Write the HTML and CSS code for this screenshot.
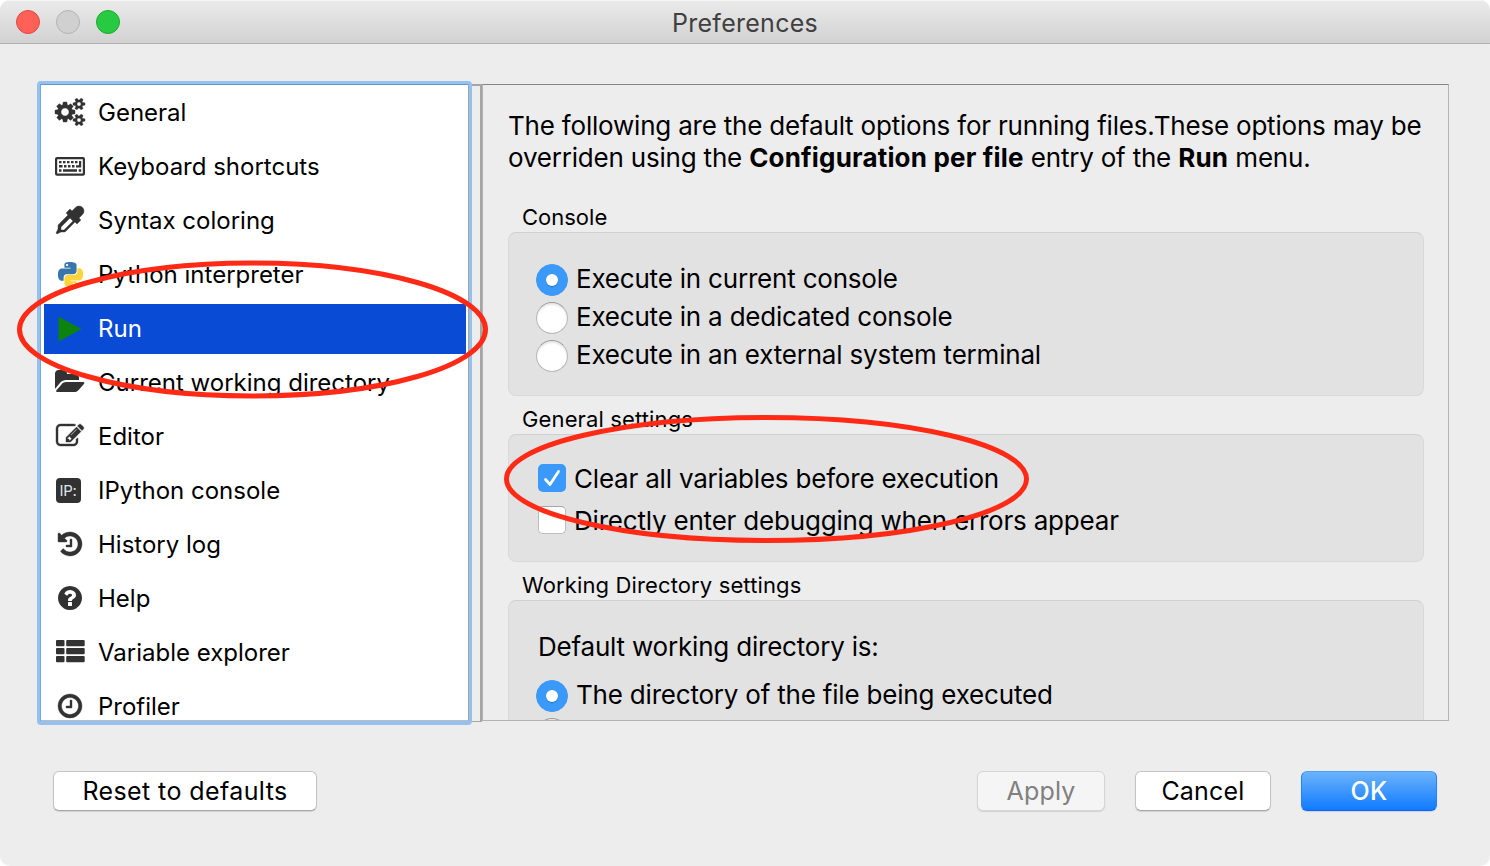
FILE: index.html
```html
<!DOCTYPE html>
<html lang="en">
<head>
<meta charset="utf-8">
<title>Preferences</title>
<link rel="stylesheet" href="styles.css">
</head>
<body>
<div class="window">
  <header class="titlebar">
    <div class="lights"><i class="light red"></i><i class="light grey"></i><i class="light green"></i></div>
    <h1 class="title">Preferences</h1>
  </header>
  <main class="content">
    <nav class="list">
      <div class="item"><span class="ico"><svg class="heavy" width="30" height="28" viewBox="0 0 1920 1792"><path d="M896 896q0-106-75-181t-181-75-181 75-75 181 75 181 181 75 181-75 75-181zm768 512q0-52-38-90t-90-38-90 38-38 90q0 53 37.500 90.500t90.500 37.500 90.500-37.500 37.500-90.500zm0-1024q0-52-38-90t-90-38-90 38-38 90q0 53 37.500 90.500t90.500 37.500 90.500-37.500 37.500-90.500zm-384 421v185q0 10-7 19.500t-16 10.500l-155 24q-11 35-32 76 34 48 90 115 7 11 7 20 0 12-7 19-23 30-82.500 89.500t-78.500 59.500q-11 0-21-7l-115-90q-37 19-77 31-11 108-23 155-7 24-30 24h-186q-11 0-20-7.500t-10-17.500l-23-153q-34-10-75-31l-118 89q-7 7-20 7-11 0-21-8-144-133-144-160 0-9 7-19 10-14 41-53t47-61q-23-44-35-82l-152-24q-10-1-17-9.500t-7-19.500v-185q0-10 7-19.500t16-10.500l155-24q11-35 32-76-34-48-90-115-7-11-7-20 0-12 7-20 22-30 82-89t79-59q11 0 21 7l115 90q34-18 77-32 11-108 23-154 7-24 30-24h186q11 0 20 7.500t10 17.500l23 153q34 10 75 31l118-89q8-7 20-7 11 0 21 8 144 133 144 160 0 8-7 19-12 16-42 54t-45 60q23 48 34 82l152 23q10 2 17 10.500t7 19.500zm640 533v140q0 16-149 31-12 27-30 52 51 113 51 138 0 4-4 7-122 71-124 71-8 0-46-47t-52-68q-20 2-30 2t-30-2q-14 21-52 68t-46 47q-2 0-124-71-4-3-4-7 0-25 51-138-18-25-30-52-149-15-149-31v-140q0-16 149-31 13-29 30-52-51-113-51-138 0-4 4-7 4-2 35-20t59-34 30-16q8 0 46 46.500t52 67.500q20-2 30-2t30 2q51-71 92-112l6-2q4 0 124 70 4 3 4 7 0 25-51 138 17 23 30 52 149 15 149 31zm0-1024v140q0 16-149 31-12 27-30 52 51 113 51 138 0 4-4 7-122 71-124 71-8 0-46-47t-52-68q-20 2-30 2t-30-2q-14 21-52 68t-46 47q-2 0-124-71-4-3-4-7 0-25 51-138-18-25-30-52-149-15-149-31v-140q0-16 149-31 13-29 30-52-51-113-51-138 0-4 4-7 4-2 35-20t59-34 30-16q8 0 46 46.500t52 67.500q20-2 30-2t30 2q51-71 92-112l6-2q4 0 124 70 4 3 4 7 0 25-51 138 17 23 30 52 149 15 149 31z"/></svg></span><span class="label">General</span></div>
      <div class="item"><span class="ico"><svg width="30" height="20" viewBox="0 0 30 20"><path fill-rule="evenodd" d="M2 1h26a2 2 0 0 1 2 2v14.800a2 2 0 0 1-2 2H2a2 2 0 0 1-2-2V3a2 2 0 0 1 2-2zM2.200 3.200v14.200h25.600V3.200z"/><path d="M4 5h2.500v2.300H4zM8 5h2.500v2.300H8zM12 5h2.500v2.300H12zM16 5h2.500v2.300H16zM20 5h2.500v2.300H20zM24 5h2.200v6.500H21V9.200h3zM4 9h3.500v2.500H4zM9 9h2.500v2.500H9zM13 9h2.500v2.500H13zM17 9h2.500v2.500H17zM4 13.300h2.500v2.400H4zM8 13.300h14v2.400H8zM23.700 13.300h2.500v2.400h-2.500z"/></svg></span><span class="label">Keyboard shortcuts</span></div>
      <div class="item"><span class="ico"><svg class="heavy" width="28" height="28" viewBox="0 0 1792 1792"><path d="M1698 94q94 94 94 226.500t-94 225.500l-225 223 104 104q10 10 10 23t-10 23l-210 210q-10 10-23 10t-23-10l-105-105-603 603q-37 37-90 37h-203l-256 128-64-64 128-256v-203q0-53 37-90l603-603-105-105q-10-10-10-23t10-23l210-210q10-10 23-10t23 10l104 104 223-225q93-94 225.500-94t226.500 94zm-1186 1442l576-576-192-192-576 576v192h192z"/></svg></span><span class="label">Syntax coloring</span></div>
      <div class="item"><span class="ico"><svg width="25" height="25" viewBox="0 0 24 24"><path fill="#3776ab" d="M14.25.18l.9.2.73.26.59.3.45.32.34.34.25.34.16.33.1.3.04.26.02.2-.01.13V8.500l-.05.63-.13.55-.21.46-.26.38-.3.31-.33.25-.35.19-.35.14-.33.1-.3.07-.26.04-.21.02H8.770l-.69.05-.59.14-.5.22-.41.27-.33.32-.27.35-.2.36-.15.37-.1.35-.07.32-.04.27-.02.21v3.060H3.170l-.21-.03-.28-.07-.32-.12-.35-.18-.36-.26-.36-.36-.35-.46-.32-.59-.28-.73-.21-.88-.14-1.050-.05-1.230.06-1.220.16-1.040.24-.87.32-.71.36-.57.4-.44.42-.33.42-.24.4-.16.36-.1.32-.05.24-.01h.16l.06.01h8.160v-.83H6.180l-.01-2.750-.02-.37.05-.34.11-.31.17-.28.25-.26.31-.23.38-.2.44-.18.51-.15.58-.12.64-.1.71-.06.77-.04.84-.02 1.270.05zm-6.300 1.980l-.23.33-.08.41.08.41.23.34.33.22.41.09.41-.09.33-.22.23-.34.08-.41-.08-.41-.23-.33-.33-.22-.41-.09-.41.09z"/><path fill="#ffd43b" transform="rotate(180 12 12)" d="M14.25.18l.9.2.73.26.59.3.45.32.34.34.25.34.16.33.1.3.04.26.02.2-.01.13V8.500l-.05.63-.13.55-.21.46-.26.38-.3.31-.33.25-.35.19-.35.14-.33.1-.3.07-.26.04-.21.02H8.770l-.69.05-.59.14-.5.22-.41.27-.33.32-.27.35-.2.36-.15.37-.1.35-.07.32-.04.27-.02.21v3.060H3.170l-.21-.03-.28-.07-.32-.12-.35-.18-.36-.26-.36-.36-.35-.46-.32-.59-.28-.73-.21-.88-.14-1.050-.05-1.230.06-1.220.16-1.040.24-.87.32-.71.36-.57.4-.44.42-.33.42-.24.4-.16.36-.1.32-.05.24-.01h.16l.06.01h8.160v-.83H6.180l-.01-2.750-.02-.37.05-.34.11-.31.17-.28.25-.26.31-.23.38-.2.44-.18.51-.15.58-.12.64-.1.71-.06.77-.04.84-.02 1.270.05zm-6.300 1.980l-.23.33-.08.41.08.41.23.34.33.22.41.09.41-.09.33-.22.23-.34.08-.41-.08-.41-.23-.33-.33-.22-.41-.09-.41.09z"/></svg></span><span class="label">Python interpreter</span></div>
      <div class="item selected"><span class="ico"><svg width="24" height="26" viewBox="0 0 24 26"><path fill="#0d820d" d="M.5.5 23.500 13 .5 25.500z"/></svg></span><span class="label">Run</span></div>
      <div class="item"><span class="ico"><svg width="30" height="28" viewBox="0 0 1920 1792"><path d="M1879 952q0 31-31 66l-336 396q-43 51-120.500 86.500t-143.500 35.500h-1088q-34 0-60.500-13t-26.500-43q0-31 31-66l336-396q43-51 120.500-86.500t143.500-35.500h1088q34 0 60.500 13t26.500 43zm-343-344v160h-832q-94 0-197 47.500t-164 119.500l-337 396-5 6q0-4-.5-12.500t-.5-12.500v-960q0-92 66-158t158-66h320q92 0 158 66t66 158v32h544q92 0 158 66t66 158z"/></svg></span><span class="label">Current working directory</span></div>
      <div class="item"><span class="ico"><svg class="heavy" width="28" height="28" viewBox="0 0 1792 1792"><path d="M888 1184l116-116-152-152-116 116v56h96v96h56zm440-720q-16-16-33 1l-350 350q-17 17-1 33t33-1l350-350q17-17 1-33zm80 594v190q0 119-84.500 203.500t-203.500 84.500h-832q-119 0-203.500-84.500t-84.500-203.500v-832q0-119 84.500-203.500t203.500-84.500h832q63 0 117 25 15 7 18 23 3 17-9 29l-49 49q-14 14-32 8-23-6-45-6h-832q-66 0-113 47t-47 113v832q0 66 47 113t113 47h832q66 0 113-47t47-113v-126q0-13 9-22l64-64q15-15 35-7t20 29zm-96-738l288 288-672 672h-288v-288zm444 132l-92 92-288-288 92-92q28-28 68-28t68 28l152 152q28 28 28 68t-28 68z"/></svg></span><span class="label">Editor</span></div>
      <div class="item"><span class="ico"><span class="ip">IP:</span></span><span class="label">IPython console</span></div>
      <div class="item"><span class="ico"><svg class="heavy" width="28" height="28" viewBox="0 0 1792 1792"><path d="M1664 896q0 156-61 298t-164 245-245 164-298 61q-172 0-327-72.500t-264-204.500q-7-10-6.500-22.500t8.500-20.500l137-138q10-9 25-9 16 2 23 12 73 95 179 147t225 52q104 0 198.500-40.500t163.500-109.500 109.500-163.500 40.500-198.500-40.500-198.500-109.500-163.500-163.500-109.500-198.500-40.500q-98 0-188 35.500t-160 101.500l137 138q31 30 14 69-17 40-59 40h-448q-26 0-45-19t-19-45v-448q0-42 40-59 39-17 69 14l130 129q107-101 244.500-156.500t284.500-55.500q156 0 298 61t245 164 164 245 61 298zm-640-288v448q0 14-9 23t-23 9h-320q-14 0-23-9t-9-23v-64q0-14 9-23t23-9h224v-352q0-14 9-23t23-9h64q14 0 23 9t9 23z"/></svg></span><span class="label">History log</span></div>
      <div class="item"><span class="ico"><svg width="28" height="28" viewBox="0 0 1792 1792"><path d="M1024 1376v-192q0-14-9-23t-23-9h-192q-14 0-23 9t-9 23v192q0 14 9 23t23 9h192q14 0 23-9t9-23zm256-672q0-88-55.500-163t-138.500-116-170-41q-243 0-371 213-15 24 8 42l132 100q7 6 19 6 16 0 25-12 53-68 86-92 34-24 86-24 48 0 85.500 26t37.500 59q0 38-20 61t-68 45q-63 28-115.500 86.500t-52.500 125.500v36q0 14 9 23t23 9h192q14 0 23-9t9-23q0-19 21.500-49.500t54.500-49.500q32-18 49-28.500t46-35 44.500-48 28-60.500 12.500-81zm384 192q0 209-103 385.500t-279.500 279.500-385.500 103-385.500-103-279.500-279.500-103-385.500 103-385.500 279.500-279.500 385.500-103 385.500 103 279.500 279.500 103 385.500z"/></svg></span><span class="label">Help</span></div>
      <div class="item"><span class="ico"><svg width="29" height="24" viewBox="0 0 29 24"><rect y="0" width="8.500" height="6.200" rx="1"/><rect x="10.200" y="0" width="18.500" height="6.200" rx="1"/><rect y="8" width="8.500" height="6.200" rx="1"/><rect x="10.200" y="8" width="18.500" height="6.200" rx="1"/><rect y="16" width="8.500" height="6.200" rx="1"/><rect x="10.200" y="16" width="18.500" height="6.200" rx="1"/></svg></span><span class="label">Variable explorer</span></div>
      <div class="item"><span class="ico"><svg class="heavy" width="28" height="28" viewBox="0 0 1792 1792"><path d="M1024 544v448q0 14-9 23t-23 9h-320q-14 0-23-9t-9-23v-64q0-14 9-23t23-9h224v-352q0-14 9-23t23-9h64q14 0 23 9t9 23zm416 352q0-148-73-273t-198-198-273-73-273 73-198 198-73 273 73 273 198 198 273 73 273-73 198-198 73-273zm224 0q0 209-103 385.500t-279.500 279.500-385.500 103-385.500-103-279.500-279.500-103-385.500 103-385.500 279.500-279.500 385.500-103 385.500 103 279.500 279.500 103 385.500z"/></svg></span><span class="label">Profiler</span></div>
    </nav>
    <div class="splitter"></div>
    <section class="panel">
      <p class="intro">The following are the default options for running files.These options may be<br>overriden using the <b>Configuration per file</b> entry of the <b>Run</b> menu.</p>
      <h2 class="legend">Console</h2>
      <div class="group console">
        <label class="row"><i class="radio on"></i><span>Execute in current console</span></label>
        <label class="row"><i class="radio"></i><span>Execute in a dedicated console</span></label>
        <label class="row"><i class="radio"></i><span>Execute in an external system terminal</span></label>
      </div>
      <h2 class="legend">General settings</h2>
      <div class="group general">
        <label class="row"><i class="check on"><svg width="28" height="28" viewBox="0 0 28 28"><path d="M7.500 15.500 12 20.500 20.500 7.500" fill="none" stroke="#fff" stroke-width="2.800" stroke-linecap="round" stroke-linejoin="round"/></svg></i><span>Clear all variables before execution</span></label>
        <label class="row"><i class="check"></i><span>Directly enter debugging when errors appear</span></label>
      </div>
      <h2 class="legend">Working Directory settings</h2>
      <div class="group workdir">
        <p class="note">Default working directory is:</p>
        <label class="row"><i class="radio on"></i><span>The directory of the file being executed</span></label>
        <label class="row"><i class="radio"></i></label>
      </div>
    </section>
  </main>
  <footer class="buttons">
    <button class="btn reset">Reset to defaults</button>
    <button class="btn apply" disabled>Apply</button>
    <button class="btn cancel">Cancel</button>
    <button class="btn ok">OK</button>
  </footer>
  <svg class="marks" width="1490" height="866" viewBox="0 0 1490 866"><ellipse cx="252.500" cy="329.500" rx="233" ry="66.500"/><ellipse cx="766.500" cy="479" rx="260" ry="61.500"/></svg>
</div>
</body>
</html>
```

FILE: styles.css
```css
* { box-sizing: border-box; }
body { margin: 0; background: #fff; font-family: Inter, "Liberation Sans", sans-serif; color: #000; }
h1, h2, p { margin: 0; font-weight: 400; }
.window { position: relative; display: flex; flex-direction: column; width: 1490px; height: 866px; background: #ededed; border-radius: 10px; overflow: hidden; }
.titlebar { display: grid; grid-template-columns: 1fr auto 1fr; align-items: center; height: 44px; background: linear-gradient(#ebebeb, #d2d2d2); border-bottom: 1px solid #b1b1b1; box-shadow: inset 0 1px #f5f5f5; }
.lights { display: flex; gap: 16px; padding-left: 16px; }
.light { width: 24px; height: 24px; border-radius: 50%; border: 1px solid; }
.red { background: #ff6058; border-color: #e14942; }
.grey { background: #d0d0d0; border-color: #b3b3b3; }
.green { background: #28ca42; border-color: #1bab2c; }
.title { padding-top: 2px; font-size: 25px; line-height: 30px; letter-spacing: .27px; color: #404040; }
.content { display: flex; height: 645px; margin: 37px 41px 0 37px; }
.list { width: 435px; height: 644px; padding: 4px 2px 0 3px; border: 3px solid #95c1f1; border-bottom-width: 4px; border-radius: 4px; background: #fff; box-shadow: inset 0 1px #6597cc, inset 1px 0 #79a8dd, inset -1px 0 #a5a5a5, inset 0 -1px #bcbcbc; display: flex; flex-direction: column; gap: 4px; overflow: hidden; }
.item { flex: none; display: flex; align-items: center; height: 50px; padding-left: 10px; margin: 0 1px; font-size: 24px; }
.item.selected { background: #0a4bd6; color: #fff; }
.ico { width: 32px; height: 32px; margin: 0 12px 2px 0; display: flex; align-items: center; justify-content: center; fill: #323232; }
.ico svg { display: block; }
.heavy { stroke: #323232; stroke-width: 26; overflow: visible; }
.selected .ico { margin-bottom: 1px; }
.label { line-height: 30px; }
.ip { width: 25px; height: 25px; margin-right: 4px; border-radius: 4px; background: #323232; color: #dbe6ee; font-size: 15px; line-height: 25px; letter-spacing: -.3px; text-align: center; }
.splitter { width: 10px; height: 638px; margin-top: 3px; border: solid #a5a5a5; border-width: 2px 2px 1px 0; }
.panel { width: 967px; height: 637px; margin-top: 3px; padding: 25px 24px 0 25px; border: 1px solid #b3b3b3; border-top-color: #858585; overflow: hidden; font-size: 26px; letter-spacing: -.2px; }
.intro { line-height: 32px; white-space: nowrap; }
.intro b { font-weight: 700; letter-spacing: .18px; }
.legend { height: 30px; margin-top: 8px; padding-left: 14px; font-size: 22px; line-height: 30px; letter-spacing: .13px; }
.intro + .legend { margin-top: 28px; letter-spacing: 0; }
.group { border: 1px solid #d9d9d9; border-top-color: #d0d0d0; border-radius: 8px; background: #e2e2e2; }
.console { height: 164px; padding: 28px 27px; }
.general { height: 128px; padding: 22px 29px; }
.workdir { height: 200px; padding: 28px 27px; }
.row { display: flex; align-items: center; gap: 8px; height: 38px; line-height: 32px; white-space: nowrap; }
.row span { padding-bottom: 2px; }
.general .row { height: 42px; }
.general .row span { padding: 2px 0 0; }
.note { height: 48px; padding-left: 2px; line-height: 36px; }
.radio { width: 32px; height: 32px; border-radius: 50%; background: #fff; border: 1px solid #b8b8b8; border-top-color: #999; box-shadow: inset 0 2px 2px #e6e6e6; }
.radio.on { display: flex; align-items: center; justify-content: center; background: #3b99fc; border-color: #3b99fc; box-shadow: none; }
.radio.on::after { content: ""; width: 12px; height: 12px; border-radius: 50%; background: #fff; box-shadow: 0 1px 1px #2476cc; }
.check { width: 28px; height: 28px; border-radius: 5px; background: #fff; border: 1px solid #bcbcbc; border-top-color: #a5a5a5; }
.check.on { background: #3b99fc; border: 0; }
.check svg { display: block; }
.buttons { display: flex; margin: 45px 53px 0; }
.btn { height: 40px; padding: 0; border: 1px solid #c4c4c4; border-bottom-color: #a6a6a6; border-radius: 6px; background: #fff; box-shadow: 0 1px 1px #d2d2d2; font: 25px/36px Inter, sans-serif; letter-spacing: .2px; color: #000; }
.reset { width: 264px; margin-right: auto; letter-spacing: .4px; }
.apply { width: 128px; background: #f5f5f5; border-color: #d5d5d5; color: #808080; }
.cancel { width: 136px; margin: 0 30px; }
.ok { width: 136px; background: linear-gradient(#6cb3fa, #0f7bff); border-color: #4ba0f7 #2484f7 #0b62f6; color: #fff; font-weight: 500; }
.marks { position: absolute; inset: 0; fill: none; stroke: #ff2a16; stroke-width: 5; pointer-events: none; }
```
